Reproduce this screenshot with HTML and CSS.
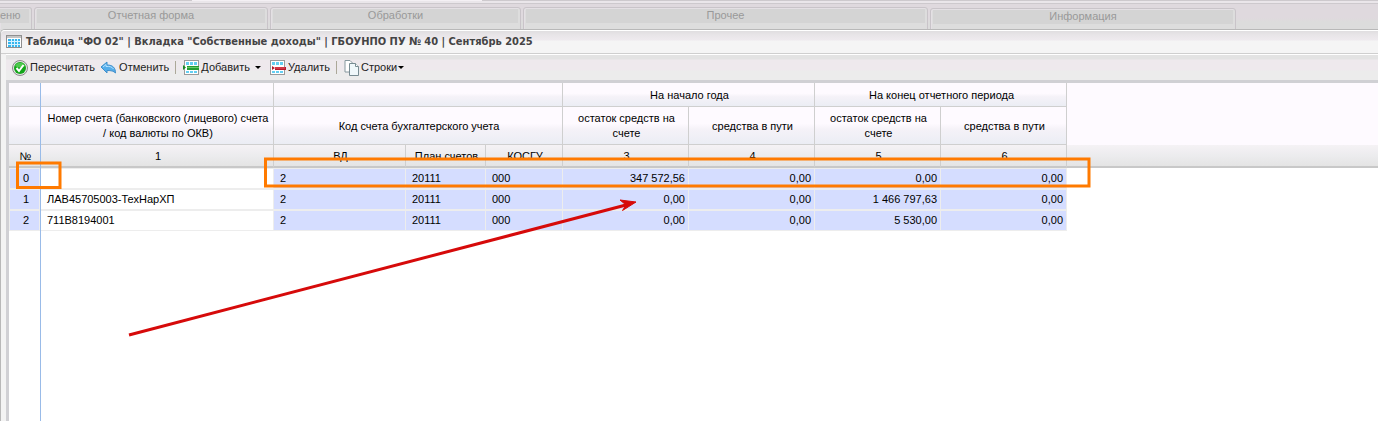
FILE: index.html
```html
<!DOCTYPE html>
<html lang="ru">
<head>
<meta charset="utf-8">
<title>Таблица "ФО 02"</title>
<link rel="stylesheet" href="styles.css">
</head>
<body>
<header class="ribbon">
  <div class="ribbon-top"><div class="ribbon-tab"></div></div>
  <nav class="groups">
    <section class="group group-menu"><h2>еню</h2></section>
    <section class="group group-form"><h2>Отчетная форма</h2></section>
    <section class="group group-process"><h2>Обработки</h2></section>
    <section class="group group-other"><h2>Прочее</h2></section>
    <section class="group group-info"><h2>Информация</h2></section>
  </nav>
</header>
<main class="window">
  <div class="titlebar">
    <svg class="title-icon" width="16" height="14" viewBox="0 0 16 14"><rect x=".5" y=".5" width="15" height="12" fill="#fff" stroke="#8f8f8f"/><path d="M1 1h14v2H1z" fill="#c4c4c4"/><path d="M2 4h12v8H2z" fill="#35b6ee"/><path d="M2 6.500h12M2 9.500h12M5.500 4v8M8.500 4v8M11.500 4v8" stroke="#d6f2ff"/></svg>
    <h1>Таблица "ФО 02" | Вкладка "Собственные доходы" | ГБОУНПО ПУ № 40 | Сентябрь 2025</h1>
  </div>
  <div class="panel">
    <div class="toolbar" role="toolbar">
      <button type="button" class="tool tool-recalc"><svg width="16" height="16" viewBox="0 0 16 16"><circle cx="8" cy="8" r="7.500" fill="#e4e4e4" stroke="#8b8b8b"/><circle cx="8" cy="8" r="6" fill="#12a519"/><path d="M3 6a5.500 5.500 0 0 1 10 0q-5 3-10 0" fill="#4fc94e"/><path d="M4.500 8l2.500 3 4.500-6" fill="none" stroke="#fff" stroke-width="2"/></svg><span>Пересчитать</span></button>
      <button type="button" class="tool tool-undo"><svg width="17" height="16" viewBox="0 0 17 16"><path d="M1 7l6-5v3c6 0 8.500 3 8.500 8-2-2-4-2.500-8.500-2.500V13z" fill="#55adea" stroke="#3f8fcb" stroke-linejoin="round"/><path d="M3 7l3-2.500V6.500c4-.5 6 .5 7.500 2.500" fill="none" stroke="#b7e2ff"/></svg><span>Отменить</span></button>
      <i class="sep"></i>
      <button type="button" class="tool tool-add"><svg width="16" height="16" viewBox="0 0 16 16"><rect x="1.500" y=".5" width="14" height="14" fill="#fff" stroke="#9a9a9a"/><path d="M3 2h3v3H3zM7 2h3v3H7zM11 2h3v3h-3zM3 11h3v2H3zM7 11h3v2H7zM11 11h3v2h-3z" fill="#63cff2"/><path d="M0 5l3 2.500L0 10z" fill="#178a25"/><path d="M4 6h12v4H4z" fill="#249c31"/><path d="M4 7.500h12" stroke="#67cb69"/></svg><span>Добавить</span><i class="caret"></i></button>
      <button type="button" class="tool tool-delete"><svg width="16" height="16" viewBox="0 0 16 16"><rect x=".5" y=".5" width="14" height="14" fill="#fff" stroke="#9a9a9a"/><path d="M2 2h3v3H2zM6 2h3v3H6zM10 2h3v3h-3zM2 11h3v2H2zM6 11h3v2H6zM10 11h3v2h-3z" fill="#63cff2"/><path d="M2 6l3 2-3 2zM5 7h11v3H5z" fill="#b5182c"/><path d="M5 8h10" stroke="#ee5660"/></svg><span>Удалить</span></button>
      <i class="sep"></i>
      <button type="button" class="tool tool-rows"><svg width="15" height="16" viewBox="0 0 15 16"><path d="M1 .5h5l3 3V12H1z" fill="#fff" stroke="#86989e"/><path d="M5.500 3.500h6l3 3v9h-9z" fill="#f0f8fb" stroke="#788c93"/><path d="M11.500 3.500v3h3" fill="#fff" stroke="#788c93"/></svg><span>Строки</span><i class="caret"></i></button>
    </div>
    <div class="grid">
      <table>
        <colgroup><col class="c-num"><col class="c-account"><col class="c-vd"><col class="c-plan"><col class="c-kosgu"><col class="c-sum"><col class="c-sum"><col class="c-sum"><col class="c-sum"><col></colgroup>
        <thead>
          <tr class="h-top"><th></th><th></th><th colspan="3"></th><th colspan="2">На начало года</th><th colspan="2">На конец отчетного периода</th><td class="rest" rowspan="2"></td></tr>
          <tr class="h-mid"><th></th><th>Номер счета (банковского (лицевого) счета / код валюты по ОКВ)</th><th colspan="3">Код счета бухгалтерского учета</th><th>остаток средств на счете</th><th>средства в пути</th><th>остаток средств на счете</th><th>средства в пути</th></tr>
          <tr class="h-low"><th>№</th><th>1</th><th>ВД</th><th>План счетов</th><th>КОСГУ</th><th>3</th><th>4</th><th>5</th><th>6</th><td></td></tr>
        </thead>
        <tbody>
          <tr><th>0</th><td class="name"></td><td>2</td><td>20111</td><td>000</td><td class="sum">347 572,56</td><td class="sum">0,00</td><td class="sum">0,00</td><td class="sum">0,00</td></tr>
          <tr><th>1</th><td class="name">ЛАВ45705003-ТехНарХП</td><td>2</td><td>20111</td><td>000</td><td class="sum">0,00</td><td class="sum">0,00</td><td class="sum">1 466 797,63</td><td class="sum">0,00</td></tr>
          <tr><th>2</th><td class="name">711В8194001</td><td>2</td><td>20111</td><td>000</td><td class="sum">0,00</td><td class="sum">0,00</td><td class="sum">5 530,00</td><td class="sum">0,00</td></tr>
        </tbody>
      </table>
    </div>
  </div>
</main>
<svg class="marks" width="1100" height="340" viewBox="0 0 1100 340">
  <g fill="none" stroke="#ff7a00" stroke-width="3"><rect x="17.500" y="163" width="42.500" height="24.500"/><rect x="265.500" y="159" width="823.500" height="27"/></g>
  <path d="M129 335L626 205" stroke="#d60a0a" stroke-width="3"/>
  <path d="M636 202l-16-2 6 5-3.500 5.500z" fill="#d60a0a" stroke="#d60a0a"/>
</svg>
</body>
</html>
```
FILE: styles.css
```css
* { box-sizing: border-box; }
body {
  margin: 0;
  height: 100vh;
  display: flex;
  flex-direction: column;
  overflow: hidden;
  background: #dddddd;
  color: #000;
  font: 11px/15px "Liberation Sans", Arial, sans-serif;
}
.ribbon {
  height: 29px;
  flex: none;
  overflow: hidden;
  background: linear-gradient(#dfd9de 0 18px, #dcdcdc 22px);
}
.ribbon-top {
  height: 4px;
  background: #eae6ea;
  border-top: 1px solid #cdc9cd;
  border-bottom: 1px solid #cdc9cd;
}
.ribbon-tab {
  width: 290px;
  height: 1px;
  margin-left: 192px;
  margin-top: -1px;
  background: #f4f0f4;
}
.groups { display: flex; gap: 2px; padding-top: 3px; }
.group {
  height: 30px;
  flex: none;
  border: 1px solid #c9c4c9;
  border-radius: 3px 3px 0 0;
  background: #dddddd;
  box-shadow: inset 1px 1px #e4e0e4;
  padding: 1px 2px 0;
}
.group h2 {
  margin: 0;
  height: 14px;
  line-height: 13px;
  background: #d4d4d4;
  color: #999;
  font-size: 11px;
  font-weight: normal;
  text-align: center;
}
.group-menu { width: 32px; border-left: 0; border-radius: 0 3px 0 0; padding-left: 0; }
.group-menu h2 { text-align: left; }
.group-form { width: 234px; }
.group-process { width: 251px; }
.group-other { width: 405px; }
.group-info { width: 306px; margin-top: 1px; }
.window {
  flex: 1;
  display: flex;
  flex-direction: column;
  border-left: 1px solid #b8b8b8;
  border-top: 1px solid #b8b8b8;
  border-top-left-radius: 5px;
  background: #f3f3f3;
}
.titlebar {
  height: 24px;
  flex: none;
  display: flex;
  align-items: center;
  gap: 4px;
  padding-left: 5px;
  border-top: 1px solid #fff;
  border-bottom: 1px solid #cfcfcf;
  border-top-left-radius: 4px;
  background: linear-gradient(#e0dee0 0, #e8e5e8 4px, #eeeaee 9px, #f5f5f5 10px);
}
.titlebar h1 {
  margin: 0;
  color: #444;
  font: bold 11px/16px "DejaVu Sans Condensed", Tahoma, sans-serif;
  white-space: nowrap;
}
.panel {
  flex: 1;
  display: flex;
  flex-direction: column;
  margin-left: 5px;
  border-left: 3px solid #d0d0d4;
}
.toolbar {
  height: 29px;
  flex: none;
  display: flex;
  align-items: center;
  margin-left: -3px;
  padding-left: 6px;
  border-top: 1px solid #fff;
  border-bottom: 3px solid #d0d0d4;
  background: linear-gradient(#e3e3e3 0 4px, #eee9ed 5px 15px, #ececec 16px);
}
.tool {
  display: flex;
  align-items: center;
  gap: 2px;
  padding: 0;
  border: 0;
  background: none;
  color: #222;
  font: inherit;
}
.tool-undo { margin-left: 5px; }
.caret {
  border: 3px solid transparent;
  border-top-color: #000;
  border-bottom: 0;
}
.tool-add .caret { margin-left: 3px; }
.tool-delete { margin-left: 9px; }
.tool-rows .caret { margin-left: -1px; }
.sep {
  width: 1px;
  height: 13px;
  margin: 0 7px 0 6px;
  background: #aca899;
}
.grid {
  flex: 1;
  position: relative;
  background: #fff;
}
.grid::after {
  content: "";
  position: absolute;
  left: 31px;
  top: 0;
  bottom: 0;
  width: 1px;
  background: #99bbe8;
}
table {
  width: 100%;
  table-layout: fixed;
  border-collapse: separate;
  border-spacing: 0;
}
.c-num { width: 32px; }
.c-account { width: 233px; }
.c-vd { width: 132px; }
.c-plan { width: 80px; }
.c-kosgu { width: 77px; }
.c-sum { width: 126px; }
th { font-weight: normal; }
thead th {
  padding: 1px 3px 0 5px;
  border-right: 1px solid #cfcfcf;
  border-bottom: 1px solid #cfcfcf;
  background: linear-gradient(#fefaff 0 45%, #f5f2f8 60%, #ebedf4);
}
.h-top { height: 24px; }
.h-mid { height: 38px; }
.h-low { height: 23px; }
.h-top th { padding-top: 2px; }
.rest { background: #fefaff; }
.h-low th, .h-low td {
  padding: 2px 0 0 2px;
  border-bottom: 2px solid #c8c8c8;
  background: linear-gradient(#f5f2f5, #ececee 50%, #e4e4e4);
}
tbody th, tbody td {
  height: 21px;
  padding: 0 3px 0 6px;
  border: solid #ededed;
  border-width: 1px 1px 1px 0;
  background: #d5ddff;
}
tbody th { padding: 0 0 0 3px; border-left: 1px solid #ededed; border-right-width: 2px; }
tbody .name { background: #fff; }
.sum { text-align: right; }
.marks {
  position: absolute;
  left: 0;
  top: 0;
  pointer-events: none;
}
```
